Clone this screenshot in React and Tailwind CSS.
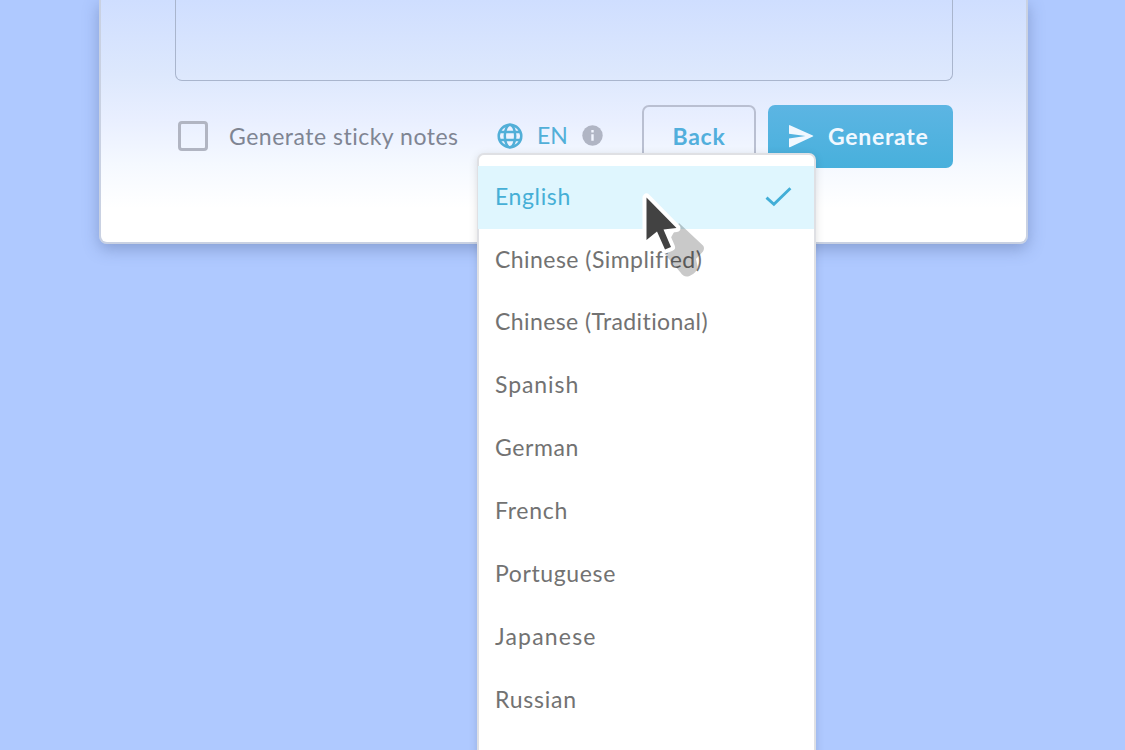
import React from 'react';
import clsx from 'clsx';

const LANGUAGES = [
  { id: 'en', label: 'English', tracking: 'tracking-[0.62px]' },
  { id: 'zh-cn', label: 'Chinese (Simplified)', tracking: 'tracking-[0.45px]' },
  { id: 'zh-tw', label: 'Chinese (Traditional)', tracking: 'tracking-[0.4px]' },
  { id: 'es', label: 'Spanish', tracking: 'tracking-[0.92px]' },
  { id: 'de', label: 'German', tracking: 'tracking-[0.6px]' },
  { id: 'fr', label: 'French', tracking: 'tracking-[0.7px]' },
  { id: 'pt', label: 'Portuguese', tracking: 'tracking-[0.62px]' },
  { id: 'ja', label: 'Japanese', tracking: 'tracking-[1.2px]' },
  { id: 'ru', label: 'Russian', tracking: 'tracking-[0.75px]' },
];

function GlobeIcon() {
  return (
    <svg width="26" height="26" viewBox="0 0 26 26" fill="none" stroke="#52afd8" strokeWidth="2.5">
      <circle cx="13" cy="13" r="11.3" />
      <ellipse cx="13" cy="13" rx="5.2" ry="11.3" />
      <path d="M2.4 9h21.2M2.4 17h21.2" />
    </svg>
  );
}

function InfoIcon() {
  return (
    <svg width="21" height="21" viewBox="0 0 21 21">
      <circle cx="10.5" cy="10.5" r="10.2" fill="#b0b5c4" />
      <path d="M9.3 5h2.4v2.4H9.3zM9.3 9.2h2.4v6.5H9.3z" fill="#f1f5ff" />
    </svg>
  );
}

function SendIcon() {
  return (
    <svg width="25" height="23" viewBox="0 0 25 23" fill="#f1f8ff">
      <path d="M.9.2 23.8 10.4a.7.7 0 0 1 0 1.2L.9 22.2a.6.6 0 0 1-.9-.6v-8L16.5 11 0 8.7V.8A.6.6 0 0 1 .9.2Z" />
    </svg>
  );
}

function CheckIcon() {
  return (
    <svg width="27" height="22" viewBox="0 0 27 22" fill="none" stroke="#42aed7" strokeWidth="2.9">
      <path d="M1.5 11.7 8.9 18.3 25.4 2.2" />
    </svg>
  );
}

function Cursor() {
  return (
    <svg
      className="absolute left-[635px] top-[185px]"
      width="75"
      height="98"
      viewBox="0 0 75 98"
    >
      {/* long shadow */}
      <path
        d="M44 38 68 60.5Q70 63 68 66.5L61 74 62.5 81Q63 87 54.5 91Q49 93 45.5 87.5L28 67Z"
        fill="#000"
        fillOpacity=".21"
      />
      <path
        d="M11.5 12.5V55L22 46.5 30 64.5 36 62 28.5 44.5 41.5 43Z"
        fill="#424242"
        stroke="#fff"
        strokeWidth="8"
        strokeLinejoin="round"
        paintOrder="stroke"
      />
    </svg>
  );
}

function LanguageMenu({ selected }) {
  return (
    <div className="absolute left-[477px] top-[153px] h-[620px] w-[339px] rounded-[7px] border-2 border-[#dfe0e4] bg-white pt-[11px] shadow-[0_2px_8px_rgba(0,0,0,0.13)]">
      {LANGUAGES.map((lang) => (
        <div
          key={lang.id}
          className={clsx(
            'flex h-[62.9px] items-center justify-between pr-[22px] pl-4 text-[23px]',
            lang.tracking,
            lang.id === selected ? '-ml-px bg-[#dff6fe] pl-[17px] text-[#46afd6]' : 'text-[#727272]',
          )}
        >
          <span className="-mt-[3px] whitespace-nowrap">{lang.label}</span>
          {lang.id === selected && <CheckIcon />}
        </div>
      ))}
    </div>
  );
}

export default function App() {
  return (
    <div className="relative h-[750px] w-[1125px] overflow-hidden bg-[#afc9ff] font-['Lato',sans-serif]">
      <div className="ml-[99px] h-[244px] w-[929px] rounded-b-[8px] border-2 border-t-0 border-[#c9d1e2] bg-[linear-gradient(to_bottom,#cfdeff_0px,#dde8fd_75px,#e9efff_120px,#f5f9ff_165px,#ffffff_208px)] pr-[73px] pl-[74px] shadow-[0_5px_16px_rgba(60,80,130,0.36)]">
        <div className="h-[81px] rounded-b-[7px] border border-t-0 border-[#a9b5cd]" />
        <div className="mt-6 flex h-[63px] items-center">
          <div className="-mt-px ml-[3px] size-[30px] rounded-[4px] border-[3px] border-[#b1b5c2]" />
          <span className="-mt-px ml-[21px] w-[229px] whitespace-nowrap text-[23px] tracking-[0.5px] text-[#7f8593]">
            Generate sticky notes
          </span>
          <div className="-mt-[2px] ml-[39px] flex items-center">
            <GlobeIcon />
            <span className="-mt-px ml-[14px] w-[45px] text-[23px] text-[#52afd8]">EN</span>
            <InfoIcon />
          </div>
          <div className="ml-[39px] flex h-[63px] w-[114px] items-center justify-center rounded-[7px] border-2 border-[#b9bfd1] pb-px text-[23px] font-bold tracking-[0.8px] text-[#52afdc]">
            Back
          </div>
          <div className="ml-3 flex h-[63px] w-[185px] items-center rounded-[7px] bg-linear-to-b from-[#5cb5e3] to-[#47b0dc] pl-[21px] text-[23px] font-bold text-[#f1f8ff]">
            <SendIcon />
            <span className="-mt-px ml-[14px] tracking-[0.7px]">Generate</span>
          </div>
        </div>
      </div>
      <LanguageMenu selected="en" />
      <Cursor />
    </div>
  );
}
